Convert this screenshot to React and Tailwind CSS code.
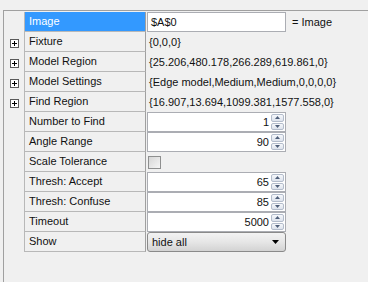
const rows = [
  { label: 'Image', kind: 'image', selected: true },
  { label: 'Fixture', kind: 'text', value: '{0,0,0}', plus: true },
  { label: 'Model Region', kind: 'text', value: '{25.206,480.178,266.289,619.861,0}', plus: true },
  { label: 'Model Settings', kind: 'text', value: '{Edge model,Medium,Medium,0,0,0,0}', plus: true },
  { label: 'Find Region', kind: 'text', value: '{16.907,13.694,1099.381,1577.558,0}', plus: true },
  { label: 'Number to Find', kind: 'spin', value: '1' },
  { label: 'Angle Range', kind: 'spin', value: '90' },
  { label: 'Scale Tolerance', kind: 'check' },
  { label: 'Thresh: Accept', kind: 'spin', value: '65' },
  { label: 'Thresh: Confuse', kind: 'spin', value: '85' },
  { label: 'Timeout', kind: 'spin', value: '5000' },
  { label: 'Show', kind: 'select', value: 'hide all' },
]

function PlusBox() {
  return (
    <div className="w-[9px] h-[9px] border border-[#5a5a5a] bg-white flex items-center justify-center">
      <svg width="7" height="7" viewBox="0 0 7 7">
        <path d="M1 3.5h5M3.5 1v5" stroke="#000" strokeWidth="1" />
      </svg>
    </div>
  )
}

function Spinner() {
  return (
    <div className="w-[14px] h-full flex flex-col gap-px py-px pr-px">
      {['M1 4 L3.5 1 L6 4 Z', 'M1 1 L3.5 4 L6 1 Z'].map((d) => (
        <div
          key={d}
          className="flex-1 border border-[#b3bccb] rounded-[2px] bg-gradient-to-b from-[#f6f8fb] to-[#dde3ec] flex items-center justify-center"
        >
          <svg width="7" height="5" viewBox="0 0 7 5">
            <path d={d} fill="#4f5f7a" />
          </svg>
        </div>
      ))}
    </div>
  )
}

function Value({ row }) {
  if (row.kind === 'image') {
    return (
      <div className="flex items-center h-full">
        <div className="w-[139px] h-full border border-[#abadb3] bg-white flex items-center pl-[3px]">$A$0</div>
        <span className="ml-[6px]">= Image</span>
      </div>
    )
  }
  if (row.kind === 'text') {
    return <div className="h-full flex items-center pl-[2px] whitespace-nowrap">{row.value}</div>
  }
  if (row.kind === 'spin') {
    return (
      <div className="w-[139px] h-full border border-[#abadb3] bg-white flex items-center">
        <span className="flex-1 text-right pr-[2px]">{row.value}</span>
        <Spinner />
      </div>
    )
  }
  if (row.kind === 'check') {
    return (
      <div className="h-full flex items-center pl-px">
        <div className="w-[13px] h-[13px] border border-[#8e8f8f] bg-gradient-to-br from-[#d6d6d6] to-[#f6f6f6]" />
      </div>
    )
  }
  return (
    <div className="w-[139px] h-full border border-[#8a8a8a] rounded-[3px] bg-gradient-to-b from-[#f3f3f3] via-[#e6e6e6] to-[#d3d3d3] flex items-center pl-[4px] pr-[6px]">
      <span className="flex-1">{row.value}</span>
      <svg width="7" height="4" viewBox="0 0 7 4">
        <path d="M0 0 L7 0 L3.5 4 Z" fill="#000" />
      </svg>
    </div>
  )
}

export default function App() {
  return (
    <div className="w-[368px] h-[282px] bg-[#f0f0f0] pt-[10px] pl-[3px] overflow-hidden font-['Liberation_Sans',Arial,sans-serif] text-[11px] text-[#111]">
      <div className="h-full border-l border-t border-[#a0a0a0] pt-px">
        {rows.map((row) => (
          <div key={row.label} className="flex h-[20px]">
            <div className="w-[20px] flex items-center justify-center pt-[2px]">
              {row.plus && <PlusBox />}
            </div>
            <div
              className={`w-[122px] border-l border-b border-r border-[#b8b8b8] border-r-[#a0a0a0] flex items-center pl-[4px] ${
                row.selected ? 'bg-[#3399ff] text-white' : 'bg-[#f0f0f0]'
              }`}
            >
              {row.label}
            </div>
            <div className="flex-1 pl-px">
              <Value row={row} />
            </div>
          </div>
        ))}
      </div>
    </div>
  )
}
